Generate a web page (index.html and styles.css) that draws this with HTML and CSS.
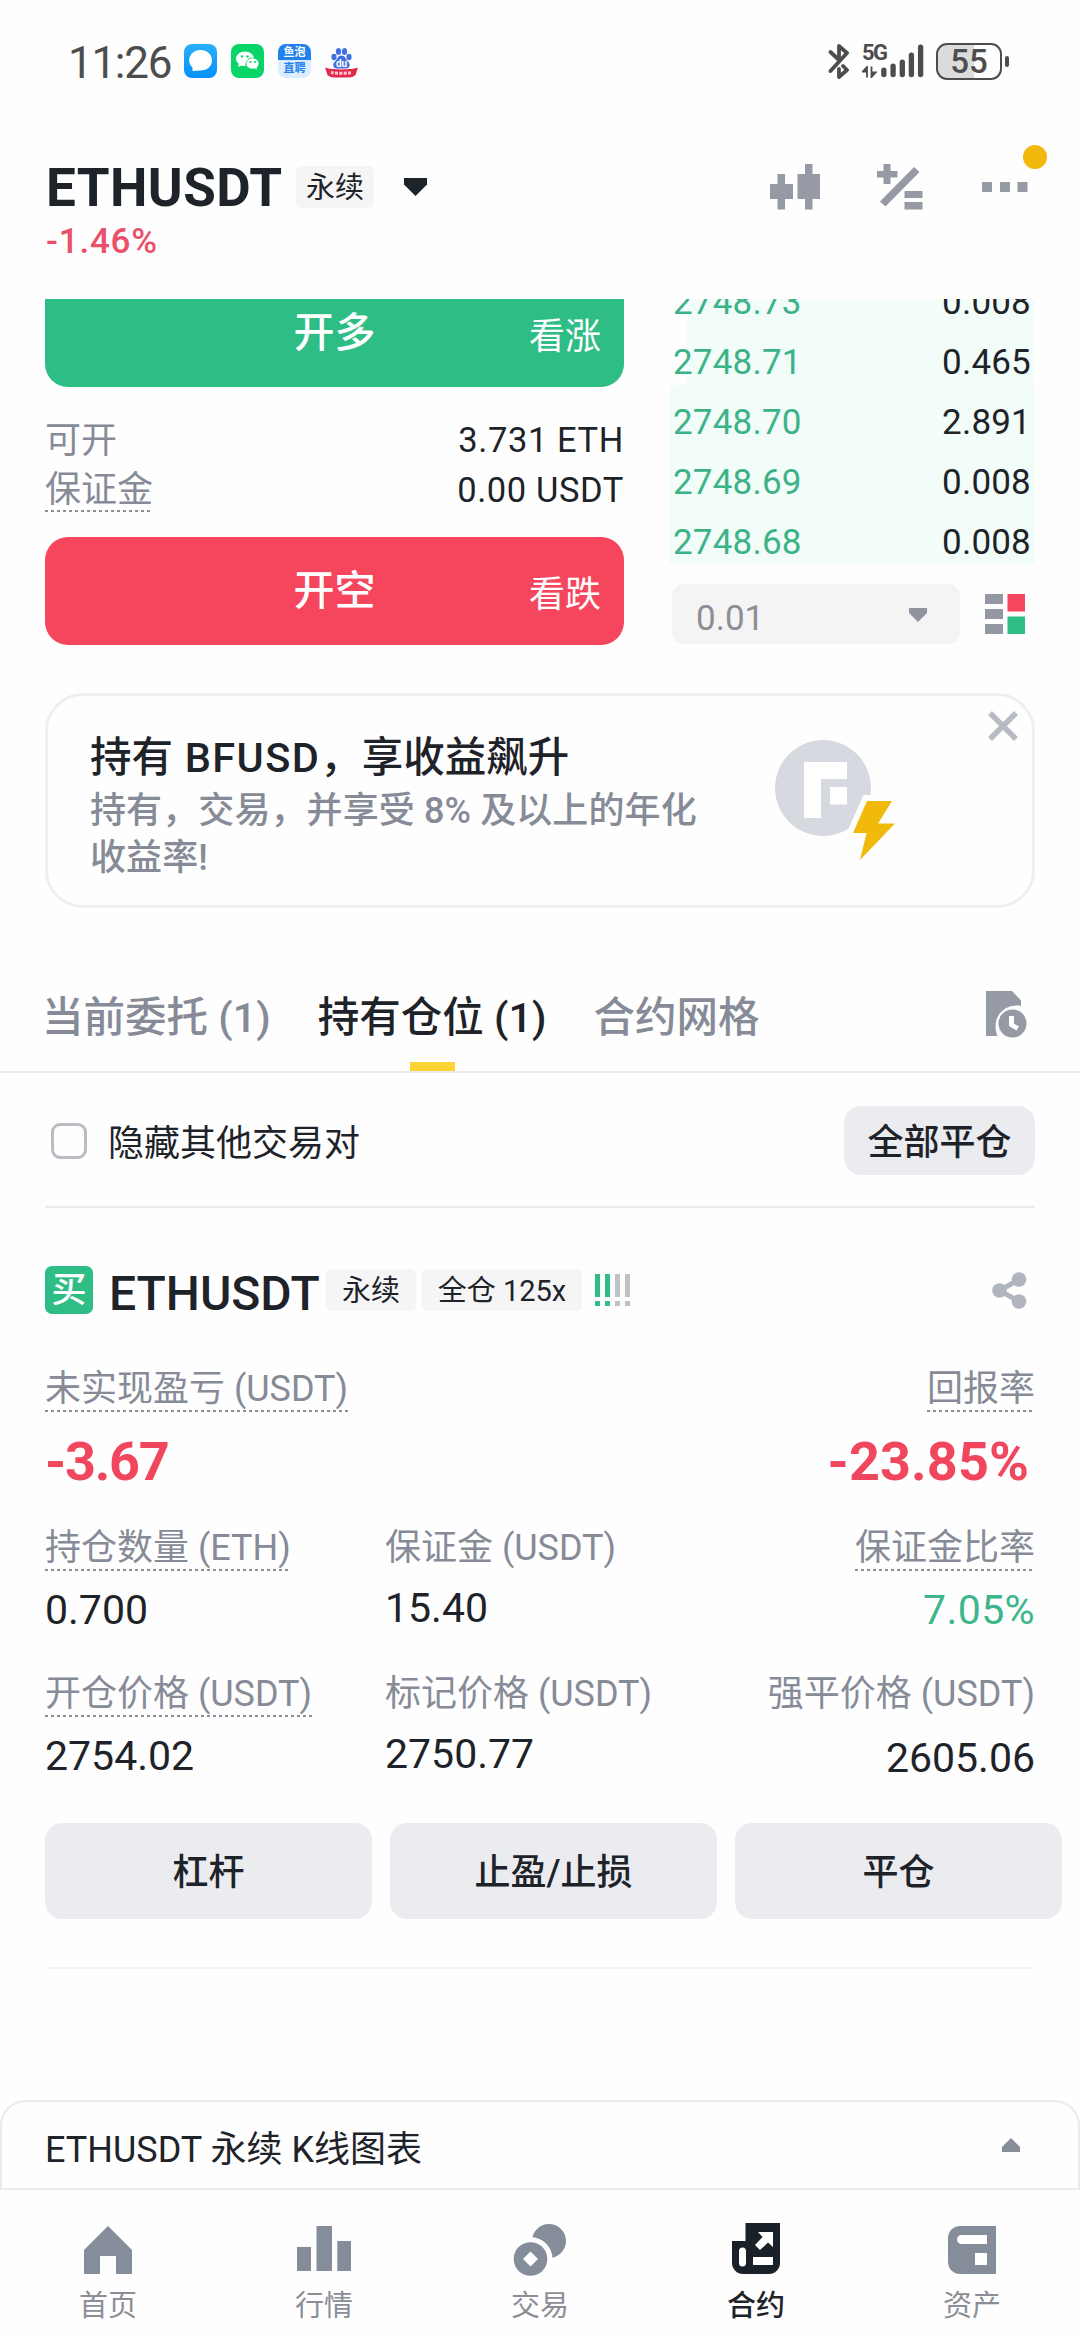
FILE: index.html
```html
<!DOCTYPE html>
<html lang="zh-CN">
<head>
<meta charset="utf-8">
<title>ETHUSDT 永续</title>
<link rel="stylesheet" href="styles.css">
</head>
<body>
<div class="screen">
  <div class="status">
    <span class="clock">11:26</span>
    <div class="status-apps">
      <svg width="33" height="34" viewBox="0 0 33 34"><defs><linearGradient id="msg" x1="0" y1="0" x2="0" y2="1"><stop offset="0" stop-color="#2bb0fb"/><stop offset="1" stop-color="#0390fb"/></linearGradient></defs><rect width="33" height="34" rx="8" fill="url(#msg)"/><path d="M16.500 6C23 6 28 10.500 28 16.500S23 26.500 16.500 26.500L8.500 27V23.500C6.500 21.500 5.200 19.500 5.200 16.500 5.200 10.500 10 6 16.500 6Z" fill="#fff"/></svg>
      <svg width="33" height="34" viewBox="0 0 33 34"><rect width="33" height="34" rx="8" fill="#08d467"/><path d="M14 7.500c5 0 9 3.300 9 7.300-5 0-9 2.700-8.500 7.200-1.500.2-3-.1-4.200-.5L7 23l.8-3.300C6 18.500 5 16.800 5 14.800 5 10.800 9 7.500 14 7.500Z" fill="#fff"/><path d="M21.500 14c3.600 0 6.500 2.500 6.500 5.600 0 1.600-.9 3-2 4.100l.6 2.300-2.800-1.200c-5 1.200-8.800-1.500-8.800-5.200 0-3.100 2.900-5.600 6.500-5.600Z" fill="#fff" stroke="#08d467" stroke-width=".8"/><g fill="#08d467"><circle cx="11" cy="12.500" r="1.200"/><circle cx="16.500" cy="12.500" r="1.200"/><circle cx="19.500" cy="18" r="1"/><circle cx="24" cy="18" r="1"/></g></svg>
      <div class="job-icon"><span>鱼泡</span><span>直聘</span></div>
      <svg width="33" height="34" viewBox="0 0 33 34"><g fill="#3f6fe0"><ellipse cx="9" cy="13" rx="2.600" ry="3.300"/><ellipse cx="13.500" cy="7.500" rx="2.600" ry="3.500"/><ellipse cx="19.500" cy="7.500" rx="2.600" ry="3.500"/><ellipse cx="24" cy="13" rx="2.600" ry="3.300"/><path d="M16.500 11.500c4 0 4 4 6.500 6 3 2.500 2 7-2 7h-9c-4 0-5-4.500-2-7 2.500-2 2.500-6 6.500-6Z"/></g><text x="16.500" y="22.500" text-anchor="middle" font-family="Roboto, sans-serif" font-weight="700" font-size="10" fill="#fff">du</text><path d="M0 23.500C6 26 27 26 33 23.500L30.500 31c-2 2-5 2.500-8 2.500h-12c-3 0-6-.5-8-2.500Z" fill="#e2284b"/><path d="M6 28.500c6 1 15 1 21 0" stroke="#f9c9d0" stroke-width="3" stroke-dasharray="3 1.200" fill="none"/></svg>
    </div>
    <div class="status-right">
      <svg class="bt" width="22" height="36" viewBox="0 0 22 36" fill="none" stroke="#4d4d4d" stroke-width="3.800" stroke-linecap="round" stroke-linejoin="round"><path d="M2.500 9 11 17V3l8 7L2.500 28M15 23l4 4-8 7V26"/></svg>
      <div class="net"><span>5G</span><svg width="15" height="12" viewBox="0 0 15 12"><path d="M5 11.500V1L.8 5.500H5M9.500 .5V11l4-4.500H9.500" fill="#4d4d4d" stroke="#4d4d4d" stroke-width="1.800"/></svg></div>
      <svg class="bars" width="43" height="34" viewBox="0 0 42 34" preserveAspectRatio="none" stroke="#4d4d4d" stroke-width="5.200" stroke-linecap="round"><path d="M2.800 26v4.600M11.800 22v8.600M20.800 18v12.600M29.700 11v19.600M38.700 3v27.600"/></svg>
      <div class="battery"><span>55</span></div><i class="nub"></i>
    </div>
  </div>

  <header class="head">
    <div class="head-row">
      <h1>ETHUSDT</h1>
      <span class="tag tag-head">永续</span>
      <svg class="caret" width="24" height="18" viewBox="0 0 24 18"><path d="M0 0h23v6.500L11.500 18 0 6.500Z" fill="#1e2329"/></svg>
      <div class="head-icons">
        <svg width="51" height="47" viewBox="0 0 51 47" fill="#959aa5"><path d="M7.500 10H15v10h8v15h-8v10.500H7.500V35H0V20h7.500ZM35 0h7.500v10H50v25h-7.500v10.500H35V35h-7.500V10H35Z"/></svg>
        <svg width="46" height="47" viewBox="0 0 46 47" fill="#959aa5"><path d="M6.500 0h7v7h7v6.500h-7V20h-7v-6.500H0V7h6.500ZM27.500 27h18v7h-18ZM27.500 38h18v7.500h-18ZM37 3 42.500 8 8.500 42.500 3 37.500Z"/></svg>
        <div class="more"><svg width="46" height="10" viewBox="0 0 46 10" fill="#959aa5"><path d="M0 0h10v10H0ZM18 0h10v10H18ZM35.500 0h10v10h-10Z"/></svg><i class="dot"></i></div>
      </div>
    </div>
    <div class="change">-1.46%</div>
  </header>

  <section class="trade">
    <div class="order">
      <button class="side buy"><b>开多</b><span>看涨</span></button>
      <div class="info">
        <div class="info-row"><span>可开</span><em>3.731 ETH</em></div>
        <div class="info-row"><span class="dotted">保证金</span><em>0.00 USDT</em></div>
      </div>
      <button class="side sell"><b>开空</b><span>看跌</span></button>
    </div>
    <div class="book">
      <div class="rows">
        <div class="row" style="--depth:95%"><span>2748.73</span><em>0.008</em></div>
        <div class="row" style="--depth:95%"><span>2748.71</span><em>0.465</em></div>
        <div class="row" style="--depth:100%"><span>2748.70</span><em>2.891</em></div>
        <div class="row" style="--depth:100%"><span>2748.69</span><em>0.008</em></div>
        <div class="row" style="--depth:100%"><span>2748.68</span><em>0.008</em></div>
      </div>
      <div class="book-foot">
        <div class="step"><span>0.01</span><svg width="18" height="14" viewBox="0 0 18 14"><path d="M0 0h18v5L9 14 0 5Z" fill="#8f949e"/></svg></div>
        <svg width="40" height="40" viewBox="0 0 40 40"><path d="M0 0h18v10H0ZM0 15h18v10H0ZM0 30h18v10H0Z" fill="#9398a4"/><path d="M22.500 0H40v17.500H22.500Z" fill="#f6465d"/><path d="M22.500 22.500H40V40H22.500Z" fill="#2ebd85"/></svg>
      </div>
    </div>
  </section>

  <section class="banner">
    <div class="banner-text">
      <h2>持有<span class="token"> BFUSD</span>，享收益飙升</h2>
      <p>持有，交易，并享受 8% 及以上的年化<br>收益率!</p>
    </div>
    <svg class="coin" width="122" height="122" viewBox="0 0 122 122"><circle cx="48" cy="48" r="48" fill="#d6d9e0"/><path d="M29 22h43v17H46v39H29ZM55 47h17v17.500H55Z" fill="#fff"/><path d="M88.500 55H100V92H72Z" fill="#fefefe"/><path d="M92 61h25l-14 22.500h17L85 120l6.500-27H78Z" fill="#f0b90b"/></svg>
    <svg class="close" width="30" height="30" viewBox="0 0 30 30"><path d="M2 2 28 28M28 2 2 28" stroke="#b7bcc4" stroke-width="5.500"/></svg>
  </section>

  <nav class="tabs">
    <div class="tab">当前委托 (1)</div>
    <div class="tab active">持有仓位 (1)</div>
    <div class="tab">合约网格</div>
    <svg width="41" height="47" viewBox="0 0 41 47"><path d="M0 0h26l9 9.500V15C19 12 4 26 11.500 45H0Z" fill="#959aa5"/><circle cx="26.500" cy="32.500" r="14" fill="#959aa5"/><path d="M23 25h5v7.500l5 3-2.500 4L23 35Z" fill="#fff"/></svg>
  </nav>

  <div class="filter">
    <i class="check"></i><span>隐藏其他交易对</span><button class="close-all">全部平仓</button>
  </div>

  <section class="position">
    <div class="pos-head">
      <span class="buy-mark">买</span>
      <h3>ETHUSDT</h3>
      <span class="tag tag-perp">永续</span>
      <span class="tag tag-lev">全仓 125x</span>
      <svg width="36" height="33" viewBox="0 0 36 33"><path d="M0 0h5v23H0ZM10 0h5v23h-5ZM0 27h5v5H0ZM10 27h5v5h-5Z" fill="#2ebd85"/><path d="M20 0h5v23h-5ZM30 0h5v23h-5ZM20 27h5v5h-5ZM30 27h5v5h-5Z" fill="#bfc1c6"/></svg>
      <svg class="share" width="35" height="37" viewBox="0 0 35 37"><path d="M27 7.500 7.500 18.500 27 29.500" fill="none" stroke="#b1b5bf" stroke-width="5"/><g fill="#b1b5bf"><circle cx="27" cy="7.500" r="7.300"/><circle cx="7.500" cy="18.500" r="7.300"/><circle cx="27" cy="29.500" r="7.300"/></g></svg>
    </div>
    <div class="pnl">
      <div><span class="label dotted">未实现盈亏 (USDT)</span><strong>-3.67</strong></div>
      <div class="right"><span class="label dotted">回报率</span><strong class="roi">-23.85%</strong></div>
    </div>
    <div class="stats">
      <div><span class="label dotted">持仓数量 (ETH)</span><em>0.700</em></div>
      <div><span class="label">保证金 (USDT)</span><em>15.40</em></div>
      <div class="right"><span class="label dotted">保证金比率</span><em class="green">7.05%</em></div>
      <div><span class="label dotted">开仓价格 (USDT)</span><em>2754.02</em></div>
      <div><span class="label">标记价格 (USDT)</span><em>2750.77</em></div>
      <div class="right"><span class="label">强平价格 (USDT)</span><em class="liq">2605.06</em></div>
    </div>
    <div class="actions"><button>杠杆</button><button>止盈/止损</button><button>平仓</button></div>
    <hr>
  </section>

  <div class="chart-bar"><span>ETHUSDT 永续 K线图表</span><svg width="18" height="14" viewBox="0 0 18 14"><path d="M9 0 18 9V14H0V9Z" fill="#888d9a"/></svg></div>

  <nav class="dock">
    <a><svg width="54" height="54" viewBox="0 0 54 54"><path d="M27 4 51 28V52H35V34H19V52H3V28Z" fill="#868d9a"/></svg>首页</a>
    <a><svg width="54" height="54" viewBox="0 0 54 54"><path d="M0 25h14v24H0ZM19.500 4H35v45H19.500ZM40.300 19H54v30H40.300Z" fill="#868d9a"/></svg>行情</a>
    <a><svg width="54" height="54" viewBox="0 0 54 54"><circle cx="36" cy="19" r="17" fill="#868d9a"/><circle cx="17.500" cy="37" r="22" fill="#fefefe"/><circle cx="17.500" cy="37" r="16.800" fill="#868d9a"/><path d="m17.500 29.500 7.500 7.500-7.500 7.500L10 37Z" fill="#fff"/></svg>交易</a>
    <a class="on"><svg width="54" height="54" viewBox="0 0 54 54"><path d="M16.500 1H51V41a11 11 0 0 1-11 11H14A11 11 0 0 1 3 41V19H16.500Z" fill="#1a2027"/><path d="M10 29a3 3 0 0 1 7 0V41a3.500 3.500 0 0 1-7 0ZM24 35H44v8H24ZM29 10H44V25l-5-4.500L31 28l-5-5 7.500-8Z" fill="#fff"/></svg>合约</a>
    <a><svg width="54" height="54" viewBox="0 0 54 54"><path d="M15 4H51V52H15A12 12 0 0 1 3 40V16A12 12 0 0 1 15 4Z" fill="#868d9a"/><path d="M16.500 13H42v9H16.500a4.500 4.500 0 0 1 0-9ZM30 31H42V43H30Z" fill="#fff"/></svg>资产</a>
  </nav>
</div>
</body>
</html>
```
FILE: styles.css
```css
* { box-sizing: border-box; }
body { margin: 0; background: #fefefe; }
.screen {
  width: 1080px; height: 2340px; overflow: hidden;
  display: flex; flex-direction: column;
  font-family: Roboto, "Noto Sans CJK SC", sans-serif;
  font-size: 36px; color: #1e2329; background: #fefefe;
}
svg { display: block; flex: none; }
h1, h2, h3, p { margin: 0; font-weight: 500; }
em, i { font-style: normal; }
button { border: 0; padding: 0; font: inherit; color: inherit; }

/* system status bar */
.status { height: 122px; flex: none; display: flex; align-items: center; padding: 0 71px 0 68px; color: #4d4d4d; }
.clock { font-size: 44px; letter-spacing: -1.300px; line-height: 50px; width: 116px; padding-top: 3px; }
.status-apps { display: flex; gap: 14px; }
.job-icon {
  width: 33px; height: 34px; border-radius: 8px; overflow: hidden;
  display: grid; grid-template-rows: 16px 18px;
  font-size: 11px; font-weight: 700; line-height: 17px; text-align: center;
  background: #dcedff; color: #2382ea;
}
.job-icon span:first-child { background: #2382ea; color: #fff; }
.status-right { margin-left: auto; display: flex; align-items: center; }
.bt { margin-right: 12px; }
.net { width: 19px; height: 34px; font-size: 22px; font-weight: 700; line-height: 18px; letter-spacing: -1.500px; white-space: nowrap; }
.net span, .net svg { display: block; }
.net svg { margin-top: 4px; }
.bars { margin-right: 12px; }
.battery {
  width: 66px; height: 37px; border: 2.500px solid #4d4d4d; border-radius: 11px;
  background: linear-gradient(90deg, #dcdcdc 58%, transparent 58%);
  font-size: 33px; font-weight: 500; line-height: 33px; text-align: center;
}
.nub { width: 4px; height: 11px; margin-left: 3px; border-radius: 2px; background: #4d4d4d; }

/* pair header */
.head { height: 177px; flex: none; padding: 40px 33px 0 46px; }
.head-row { height: 50px; display: flex; align-items: center; }
.head h1 { width: 250px; font-size: 53px; font-weight: 700; letter-spacing: 0.400px; line-height: 50px; padding-top: 2px; }
.tag { background: #f5f5f6; border-radius: 5px; font-size: 29px; text-align: center; line-height: 44px; height: 42px; white-space: nowrap; }
.tag-head { width: 78px; }
.caret { margin-left: 30px; }
.head-icons { margin-left: auto; display: flex; align-items: center; width: 277px; }
.head-icons svg + svg { margin-left: 56px; }
.more { position: relative; margin-left: 59px; }
.dot { position: absolute; left: 41px; top: -37px; width: 24px; height: 24px; border-radius: 50%; background: #f0b90b; }
.change { font-size: 35px; font-weight: 500; line-height: 59px; letter-spacing: 0.800px; color: #e9506a; }

/* order form and book */
.trade { height: 394px; flex: none; overflow: hidden; padding: 0 45px; display: flex; justify-content: space-between; }
.order { width: 579px; margin-top: -20px; }
.side { position: relative; display: block; width: 100%; height: 108px; border-radius: 23px; color: #fff; line-height: 109px; text-align: center; }
.side b { font-size: 41px; font-weight: 500; }
.side span { position: absolute; right: 23px; top: 4px; }
.buy { background: #2ebd85; }
.sell { background: #f6465d; }
.info { height: 150px; padding-top: 29px; line-height: 50px; }
.info-row { display: flex; justify-content: space-between; height: 50px; }
.info-row span { color: #868b97; }
.info-row em { font-size: 34.500px; line-height: 49px; letter-spacing: 0.600px; }
.dotted { background: repeating-linear-gradient(90deg, #8b8f98 0 3px, transparent 3px 6px) left bottom / 100% 2px no-repeat; }
.info-row .dotted { height: 46px; line-height: 48px; }
.book { width: 366px; }
.rows { height: 266px; overflow: hidden; display: flex; flex-direction: column; justify-content: flex-end; }
.row {
  height: 60px; flex: none; display: flex; justify-content: space-between; padding: 12px 4px 0 4px;
  font-size: 35px; line-height: 52px; letter-spacing: 0.200px;
  background: linear-gradient(#f2fcf8, #f2fcf8) right / var(--depth) 100% no-repeat;
}
.row span { color: #3cb387; }
.book-foot { display: flex; align-items: center; margin: 19px 10px 0 3px; justify-content: space-between; }
.step { width: 288px; height: 60px; border-radius: 11px; background: #f4f4f5; color: #8b8e95; display: flex; align-items: center; justify-content: space-between; padding: 8px 33px 0 24px; font-size: 35px; }
.step svg { margin-top: -6px; }

/* promo banner */
.banner { position: relative; height: 215px; flex: none; margin: 0 45px; border: 3px solid #efeff0; border-radius: 38px; padding: 33px 42px; display: flex; }
.banner-text { width: 681px; white-space: nowrap; }
.banner h2 { font-size: 41.500px; line-height: 58px; }
.token { letter-spacing: 1.400px; }
.banner p { line-height: 47px; padding-top: 1px; letter-spacing: 0.100px; color: #868b97; }
.coin { margin: 11px 0 0 4px; }
.close { position: absolute; right: 14px; top: 15px; }

/* list tabs */
.tabs { height: 165px; flex: none; padding: 77px 53px 0 42px; border-bottom: 2px solid #ebebed; display: flex; gap: 47px; font-size: 41.500px; line-height: 66px; color: #868b97; }
.tab { white-space: nowrap; font-weight: 500; }
.tab.active { color: #1e2329; }
.tab.active::after { content: ""; display: block; width: 45px; height: 9px; margin: 11px auto 0; background: #fcd535; }
.tabs svg { margin: 6px 0 0 auto; }
.filter { height: 135px; flex: none; margin: 0 45px; padding-top: 2px; border-bottom: 2px solid #ebebed; display: flex; align-items: center; }
.check { width: 36px; height: 36px; margin: 0 21px 0 6px; border: 3px solid #b9bcc3; border-radius: 9px; }
.filter span { line-height: 40px; padding-top: 6px; }
.close-all { margin-left: auto; width: 191px; height: 69px; border-radius: 17px; background: #ebecf0; font-weight: 500; line-height: 74px; }

/* open position */
.position { padding: 58px 45px 0; }
.pos-head { height: 48px; display: flex; align-items: center; }
.buy-mark { width: 48px; height: 48px; border-radius: 7px; background: #2ebd85; color: #fff; font-size: 35px; font-weight: 500; line-height: 50px; text-align: center; }
h3 { width: 215px; margin-left: 16px; font-size: 48px; line-height: 48px; padding-top: 7px; }
.pos-head .tag { line-height: 45px; }
.tag-perp { width: 90px; margin: 0 6px 0 2px; }
.tag-lev { width: 160px; margin-right: 13px; }
.share { margin: 0 8px 0 auto; }
.pnl { display: flex; justify-content: space-between; margin-top: 54px; height: 159px; }
.label { display: block; width: max-content; line-height: 42px; color: #868b97; white-space: nowrap; }
.label.dotted { height: 44px; }
.right { display: flex; flex-direction: column; align-items: flex-end; }
.pnl strong { display: block; font-size: 54px; line-height: 99px; letter-spacing: -1.300px; color: #f0475f; }
.pnl .roi { margin-right: 6px; letter-spacing: 0.100px; }
.stats { display: grid; grid-template-columns: 340px 1fr 1fr; row-gap: 24px; }
.stats em { display: block; font-size: 41px; line-height: 78px; height: 78px; }
.stats > :not(.right) { min-width: 0; }
.stats .green { color: #3cb68a; letter-spacing: 0.400px; }
.stats .liq { padding-top: 4px; }
.actions { display: grid; grid-template-columns: repeat(3, 327px); gap: 18px; margin-top: 28px; }
.actions button { height: 96px; border-radius: 17px; background: #ebecf0; font-weight: 500; line-height: 101px; }
hr { border: 0; height: 2px; margin: 48px 3px 0; background: #f4f4f5; }

/* chart drawer and bottom navigation */
.chart-bar { height: 90px; flex: none; margin-top: auto; border: 2px solid #ebebed; border-radius: 26px 26px 0 0; padding: 2px 58px 0 43px; display: flex; align-items: center; justify-content: space-between; }
.chart-bar svg { margin-top: -2px; }
.dock { height: 150px; flex: none; display: grid; grid-template-columns: repeat(5, 216px); padding-top: 32px; font-size: 29px; line-height: 61px; color: #8b8e96; }
.dock a { display: flex; flex-direction: column; align-items: center; }
.dock .on { color: #1e2329; font-weight: 500; }
```
